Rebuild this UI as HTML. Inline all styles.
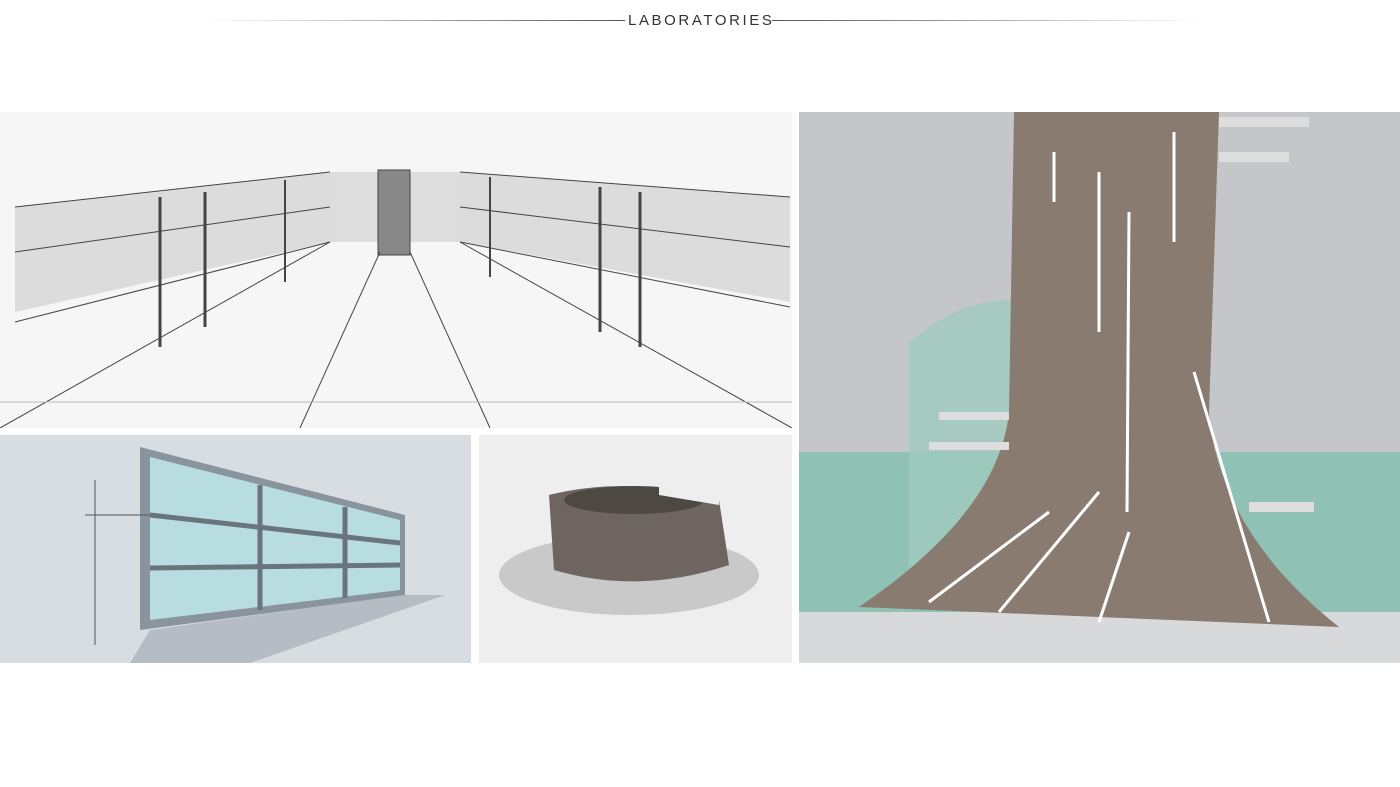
<!DOCTYPE html>
<html><head><meta charset="utf-8"><style>
body{margin:0;width:1400px;height:787px;background:#fff;position:relative;overflow:hidden;font-family:"Liberation Sans",sans-serif}
.hl{position:absolute;top:20px;height:1px}
.t{position:absolute;top:12px;left:628px;width:144px;text-align:center;font-size:15px;letter-spacing:2.6px;color:#333;font-weight:300}
.p{position:absolute;overflow:hidden}
</style></head><body>
<div class="hl" style="left:200px;width:425px;background:linear-gradient(90deg,#fff,#555)"></div>
<div class="hl" style="left:772px;width:430px;background:linear-gradient(90deg,#555,#fff)"></div>
<div class="t">LABORATORIES</div>

<div class="p" style="left:0;top:112px;width:792px;height:316px;background:#f6f6f6">
<svg width="792" height="316" stroke="#444" stroke-width="1" fill="none">
<polygon points="15,95 330,60 330,130 15,200" fill="#ccc" stroke="none" opacity=".6"/>
<polygon points="460,60 790,85 790,190 460,130" fill="#ccc" stroke="none" opacity=".6"/>
<polygon points="330,60 460,60 460,130 330,130" fill="#ddd" stroke="none"/>
<rect x="378" y="58" width="32" height="85" fill="#888"/>
<line x1="15" y1="95" x2="330" y2="60"/><line x1="15" y1="140" x2="330" y2="95"/><line x1="15" y1="210" x2="330" y2="130"/>
<line x1="460" y1="60" x2="790" y2="85"/><line x1="460" y1="95" x2="790" y2="135"/><line x1="460" y1="130" x2="790" y2="195"/>
<line x1="330" y1="130" x2="0" y2="316"/><line x1="460" y1="130" x2="792" y2="316"/>
<line x1="380" y1="140" x2="300" y2="316"/><line x1="410" y1="140" x2="490" y2="316"/>
<line x1="160" y1="85" x2="160" y2="235" stroke-width="3"/><line x1="205" y1="80" x2="205" y2="215" stroke-width="3"/>
<line x1="285" y1="68" x2="285" y2="170" stroke-width="2"/><line x1="600" y1="75" x2="600" y2="220" stroke-width="3"/><line x1="640" y1="80" x2="640" y2="235" stroke-width="3"/>
<line x1="490" y1="65" x2="490" y2="165" stroke-width="2"/>
<line x1="0" y1="290" x2="792" y2="290" stroke="#bbb"/>
</svg></div>

<div class="p" style="left:0;top:435px;width:471px;height:228px;background:#d8dde2">
<svg width="471" height="228">
<polygon points="150,195 400,160 445,160 250,228 130,228" fill="#b6bcc3"/>
<polygon points="140,12 405,80 405,160 140,195" fill="#8a949c"/>
<polygon points="150,22 400,85 400,155 150,185" fill="#b8dde0"/>
<g stroke="#6a747c" stroke-width="5"><line x1="150" y1="80" x2="400" y2="108"/><line x1="150" y1="133" x2="400" y2="130"/><line x1="260" y1="50" x2="260" y2="175"/><line x1="345" y1="72" x2="345" y2="163"/></g>
<g stroke="#555" fill="none"><line x1="95" y1="45" x2="95" y2="210"/><line x1="85" y1="80" x2="150" y2="80"/></g>
</svg></div>

<div class="p" style="left:479px;top:435px;width:313px;height:228px;background:#eeeeee">
<svg width="313" height="228">
<ellipse cx="150" cy="140" rx="130" ry="40" fill="#c9c9c9"/>
<path d="M70,60 Q150,40 240,65 L250,130 Q160,160 75,135 Z" fill="#6e6560"/>
<ellipse cx="155" cy="65" rx="70" ry="14" fill="#4e4843"/>
<path d="M180,50 L240,60 L240,70 L180,60Z" fill="#eee"/>
</svg></div>

<div class="p" style="left:799px;top:112px;width:601px;height:551px;background:#c5c6c9">
<svg width="601" height="551">
<rect x="0" y="340" width="601" height="160" fill="#8fc1b4"/>
<path d="M110,230 Q170,180 230,190 L230,490 L110,490Z" fill="#9fcabe" opacity=".8"/>
<rect x="0" y="500" width="601" height="51" fill="#d8d9db"/>
<path d="M215,0 L420,0 L410,300 Q420,420 540,515 L60,495 Q200,400 210,300 Z" fill="#8a7b70"/>
<g stroke="#fff" stroke-width="3">
<line x1="255" y1="40" x2="255" y2="90"/><line x1="300" y1="60" x2="300" y2="220"/><line x1="330" y1="100" x2="328" y2="400"/>
<line x1="375" y1="20" x2="375" y2="130"/><line x1="395" y1="260" x2="470" y2="510"/>
<line x1="300" y1="380" x2="200" y2="500"/><line x1="330" y1="420" x2="300" y2="510"/><line x1="250" y1="400" x2="130" y2="490"/>
</g>
<g fill="#ddd"><rect x="420" y="5" width="90" height="10"/><rect x="420" y="40" width="70" height="10"/><rect x="140" y="300" width="70" height="8"/><rect x="130" y="330" width="80" height="8"/><rect x="450" y="390" width="65" height="10"/></g>
</svg></div>
</body></html>
